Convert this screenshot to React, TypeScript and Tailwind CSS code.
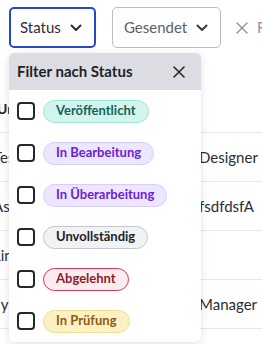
import { useState } from "react";

const statuses = [
  { label: "Veröffentlicht", cls: "bg-[#d0f5ef] border-[#9ee6da] text-[#1d5e59]" },
  { label: "In Bearbeitung", cls: "bg-[#ede6ff] border-[#d9ccfb] text-[#6b21d8]" },
  { label: "In Überarbeitung", cls: "bg-[#ede6ff] border-[#d9ccfb] text-[#6b21d8]" },
  { label: "Unvollständig", cls: "bg-[#f1f2f4] border-[#c3c6cc] text-[#1f2229]" },
  { label: "Abgelehnt", cls: "bg-[#fdecef] border-[#d23a50] text-[#8a1c2e]" },
  { label: "In Prüfung", cls: "bg-[#fcf1c4] border-[#f1dd8e] text-[#8f5a12]" },
];

const rows = [
  { left: "Tes", right: "Designer" },
  { left: "Asc", right: "fsdfdsfA" },
  { left: "Lin", right: "" },
  { left: "Ily", right: "Manager" },
];

const Chevron = () => (
  <svg width="12" height="8" viewBox="0 0 12 8" fill="none">
    <path d="M1.5 1.5L6 6L10.5 1.5" stroke="currentColor" strokeWidth="2" strokeLinecap="round" strokeLinejoin="round" />
  </svg>
);

const Cross = ({ size = 12, width = 1.6 }: { size?: number; width?: number }) => (
  <svg width={size} height={size} viewBox="0 0 12 12" fill="none">
    <path d="M1 1L11 11M11 1L1 11" stroke="currentColor" strokeWidth={width} strokeLinecap="round" />
  </svg>
);

export default function App() {
  const [checked, setChecked] = useState<string[]>([]);

  const toggle = (label: string) =>
    setChecked((c) => (c.includes(label) ? c.filter((x) => x !== label) : [...c, label]));

  return (
    <div className="relative w-[262px] h-[344px] overflow-hidden bg-white font-['Lato',sans-serif] text-[#2a2d33]">
      <div className="flex items-center pl-[9px] pt-[7px]">
        <button className="shrink-0 flex items-center justify-between w-[87px] h-[41px] pl-[9px] pr-[12px] border-2 border-[#2549c9] rounded-[5px] text-[15px] text-[#2b2e34]">
          Status
          <Chevron />
        </button>
        <button className="shrink-0 ml-[16px] flex items-center justify-between w-[109px] h-[41px] pl-[11px] pr-[12px] border border-[#b9bdc6] rounded-[5px] text-[15px] text-[#5b606a]">
          Gesendet
          <span className="text-[#3a3d44]">
            <Chevron />
          </span>
        </button>
        <span className="shrink-0 ml-[15px] text-[#8c9099]">
          <Cross size={12} width={1.4} />
        </span>
        <span className="shrink-0 ml-[9px] text-[15px] text-[#8c9099] whitespace-nowrap">Reset</span>
      </div>

      <div className="mt-[36px]">
        <div className="flex items-center h-[49px] border-b border-[#e6e7ea] text-[14px] font-bold text-[#1f2228]">
          <span className="-ml-[3px] whitespace-nowrap">Unternehmen</span>
        </div>
        {rows.map((r) => (
          <div key={r.left} className="flex items-center h-[49px] border-b border-[#e6e7ea] text-[15px] text-[#2a2d33]">
            <span className="shrink-0 w-[199px] overflow-hidden whitespace-nowrap">
              <span className="-ml-[7px] inline-block">{r.left}</span>
            </span>
            <span className="whitespace-nowrap">{r.right}</span>
          </div>
        ))}
      </div>

      <div className="absolute left-[9px] top-[53px] w-[192px] bg-white rounded-[5px] shadow-[0_2px_8px_rgba(0,0,0,0.12)] overflow-hidden">
        <div className="flex items-center justify-between h-[37px] pl-[8px] pr-[16px] bg-[#dcdde2]">
          <span className="text-[15px] font-bold text-[#1f2228]">Filter nach Status</span>
          <span className="text-[#25282e]">
            <Cross size={12} width={1.6} />
          </span>
        </div>
        <div>
          {statuses.map((s) => (
            <label key={s.label} className="flex items-center h-[42px] pl-[8px] gap-[8px] cursor-pointer">
              <input
                type="checkbox"
                checked={checked.includes(s.label)}
                onChange={() => toggle(s.label)}
                className="appearance-none shrink-0 w-[18px] h-[18px] border-2 border-[#24272d] rounded-[4px] bg-white checked:bg-[#2549c9] checked:border-[#2549c9]"
              />
              <span className={`flex items-center h-[23px] px-[12px] rounded-full border text-[13px] font-bold ${s.cls}`}>
                {s.label}
              </span>
            </label>
          ))}
        </div>
      </div>
    </div>
  );
}
